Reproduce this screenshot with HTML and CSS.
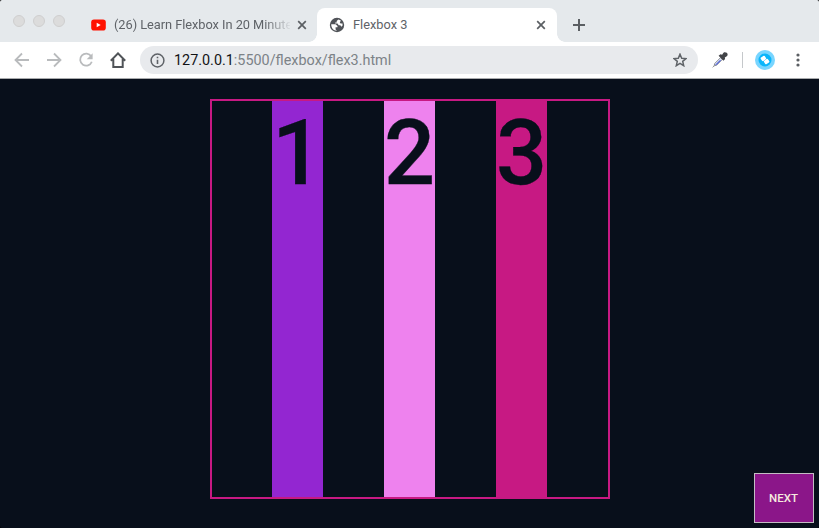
FILE: index.html
```html
<!DOCTYPE html>
<html lang="en">
<head>
<meta charset="utf-8">
<title>Flexbox 3</title>
<link rel="stylesheet" href="styles.css">
</head>
<body>
<div class="window">
  <header class="tabs">
    <div class="lights"><i></i><i></i><i></i></div>
    <div class="tab tab-back">
      <svg class="youtube" width="15" height="12" viewBox="0 0 15 12"><rect x=".2" y=".5" width="14.6" height="11" rx="2.8" fill="#ff1200"/><path d="M5.7 3.8v4.4L9.7 6z" fill="#fff"/></svg>
      <span class="title fade">(26) Learn Flexbox In 20 Minute</span>
      <svg class="close" width="10" height="10" viewBox="0 0 10 10"><path d="M1.2 1.2l7.6 7.6M8.8 1.2L1.2 8.8"/></svg>
    </div>
    <div class="tab tab-active">
      <svg class="globe" width="16" height="16" viewBox="0 0 16 16"><circle cx="8" cy="8" r="7.2" fill="#505358"/><path d="M2.2 7.3H6.6L8.5 9.1V10.3H6.6V12.6L8 13.7C4.8 13.8 2.1 11.2 2.2 7.3zM9.3 2.4L7.7 4.1V5.4H6.2V6.6H8.5L9.7 8.3H11.3L12.4 9.8 13.6 8.5 13.5 6.4H11.6L10.8 5.4 11.9 3.5z" fill="#fff"/></svg>
      <span class="title">Flexbox 3</span>
      <svg class="close" width="10" height="10" viewBox="0 0 10 10"><path d="M1.2 1.2l7.6 7.6M8.8 1.2L1.2 8.8"/></svg>
    </div>
    <svg class="plus" width="12" height="12" viewBox="0 0 12 12"><path d="M6 0v12M0 6h12"/></svg>
  </header>
  <nav class="toolbar">
    <svg class="pale" width="16" height="16" viewBox="0 0 16 16"><path d="M15 8H2M8 1.5L1.5 8 8 14.5"/></svg>
    <svg class="pale" width="16" height="16" viewBox="0 0 16 16"><path d="M1 8h13M8 1.5L14.5 8 8 14.5"/></svg>
    <svg class="pale" width="16" height="16" viewBox="0 0 16 16"><path d="M13.2 4.3A6 6 0 1 0 13.8 9.7"/><path d="M14.6 1.2v6H8.7z" fill="#b9bbbd" stroke="none"/></svg>
    <svg class="dark" width="16" height="16" viewBox="0 0 16 16"><path d="M.8 8.8L8 1.4l7.2 7.4M3.3 7v8h9.4V7"/></svg>
    <div class="address">
      <svg width="15" height="15" viewBox="0 0 15 15"><circle cx="7.5" cy="7.5" r="6.4" fill="none" stroke="#5f6368" stroke-width="1.5"/><path d="M7.5 6.7v4.4M7.5 3.7v1.6" stroke="#5f6368" stroke-width="1.6"/></svg>
      <span class="url"><b>127.0.0.1</b>:5500/flexbox/flex3.html</span>
      <svg class="star" width="14" height="14" viewBox="0 0 14 14"><path d="M7 1.2l1.7 4 4.3.4-3.3 2.8 1 4.3L7 10.4l-3.7 2.3 1-4.3L1 5.6l4.3-.4z" fill="none" stroke="#5f6368" stroke-width="1.5"/></svg>
    </div>
    <svg class="dropper" width="16" height="16" viewBox="0 0 16 16"><path d="M2.1 13.9L2.8 11.4 8.7 5.5l1.8 1.8-5.9 5.9z" fill="#dfe4f2" stroke="#8c909b"/><path d="M3 13l4.8-4.8h1.4l-4.6 4.5z" fill="#3f52d4"/><path d="M.6 15.4l1.5-1.5" stroke="#999"/><path d="M6.6 3.7l1.9-1.5 1.6.6L11.5.8C13-.3 16.3.8 15.5 3.3c-.4 1.2-1.6 1.7-2.7 2.2l.3 1.6-1.7 1.7z" fill="#424448"/></svg>
    <i class="divider"></i>
    <svg class="badge" width="20" height="20" viewBox="0 0 20 20"><circle cx="10" cy="10" r="10" fill="#78d5ff"/><circle cx="10" cy="10" r="6.5" fill="#0ab5fa"/><g fill="#fff"><rect x="-2.4" y="-2.1" width="4.8" height="4.2" rx="1" transform="translate(8.4 8.4) rotate(-35)"/><rect x="-2.4" y="-2.1" width="4.8" height="4.2" rx="1" transform="translate(11.6 11.6) rotate(-35)"/></g></svg>
    <svg class="dots" width="4" height="14" viewBox="0 0 4 14"><circle cx="2" cy="2" r="1.6"/><circle cx="2" cy="7" r="1.6"/><circle cx="2" cy="12" r="1.6"/></svg>
  </nav>
  <main class="page">
    <div class="container">
      <div class="item one">1</div>
      <div class="item two">2</div>
      <div class="item three">3</div>
    </div>
    <button class="next">NEXT</button>
  </main>
</div>
</body>
</html>
```
FILE: styles.css
```css
* { box-sizing: border-box; }
body { margin: 0; background: #000; font-family: Roboto, sans-serif; }
svg { display: block; flex: none; }
.window { height: 528px; display: flex; flex-direction: column; overflow: hidden; border-radius: 2px; }

.tabs { height: 42px; flex: none; display: flex; background: #e5e9ec; padding-left: 13px; }
.lights { display: flex; gap: 8px; padding-top: 15px; width: 78px; }
.lights i { width: 12px; height: 12px; border-radius: 50%; background: #dcdcdc; border: 1px solid #cfcfcf; }
.tab { height: 34px; margin-top: 8px; display: flex; align-items: center; font-size: 12.8px; color: #5f6368; }
.tab-back { width: 226px; }
.title { white-space: nowrap; line-height: 18px; }
.tab-back .title { width: 176px; margin-left: 8px; margin-right: 7px; letter-spacing: -.04px; overflow: hidden; }
.fade { -webkit-mask-image: linear-gradient(to right, #000 150px, transparent 178px); mask-image: linear-gradient(to right, #000 150px, transparent 178px); }
.tab-active { position: relative; width: 240px; padding: 0 11px 0 12px; background: #fff; border-radius: 8px 8px 0 0; }
.tab-active::before, .tab-active::after { content: ""; position: absolute; bottom: 0; width: 8px; height: 8px; }
.tab-active::before { left: -8px; background: radial-gradient(circle at 0 0, transparent 7.5px, #fff 8px); }
.tab-active::after { right: -8px; background: radial-gradient(circle at 100% 0, transparent 7.5px, #fff 8px); }
.tab-active .title { margin-left: 8px; margin-right: auto; }
.close, .plus { fill: none; stroke: #5b5f63; stroke-width: 1.7; }
.plus { margin: 19px 0 0 16px; stroke-width: 2; }

.toolbar { height: 37px; flex: none; display: flex; align-items: center; background: #fff; border-bottom: 1px solid #a9abad; padding-left: 14px; }
.pale, .dark { margin-right: 16px; fill: none; stroke: #b9bbbd; stroke-width: 1.8; }
.dark { stroke: #505458; stroke-width: 2; margin-right: 14px; }
.address { width: 558px; height: 28px; border-radius: 14px; background: #e8eaed; display: flex; align-items: center; padding: 0 11px 0 10px; }
.url { margin-left: 9px; padding-top: 2px; font-size: 14.38px; line-height: 20px; color: #7c8287; white-space: nowrap; }
.url b { font-weight: 400; color: #111315; }
.star { margin-left: auto; }
.dropper { margin-left: 14px; }
.divider { width: 1px; height: 16px; background: #c5c8cb; margin-left: 14px; }
.badge { margin-left: 12px; }
.dots { margin-left: 21px; fill: #5b5f63; }

.page { position: relative; flex: 1; background: #080f1b; padding-top: 20px; }
.container { width: 400px; height: 400px; margin: 0 auto 0 210px; border: 2px solid #c71983; display: flex; justify-content: center; gap: 61px; padding-right: 1px; }
.item { width: 51px; text-align: center; font-size: 90px; font-weight: 500; line-height: 105px; color: #080f1b; -webkit-text-stroke: .3px #080f1b; }
.one { background: #9326d1; }
.two { background: #ee82ee; }
.three { background: #c71983; }
.next { position: absolute; right: 5px; bottom: 5px; width: 60px; height: 50px; padding: 0 1px 0 0; border: 1px solid #c4bcc4; background: #8b1689; color: #f6eadf; font: 500 11.5px Roboto, sans-serif; }
```
